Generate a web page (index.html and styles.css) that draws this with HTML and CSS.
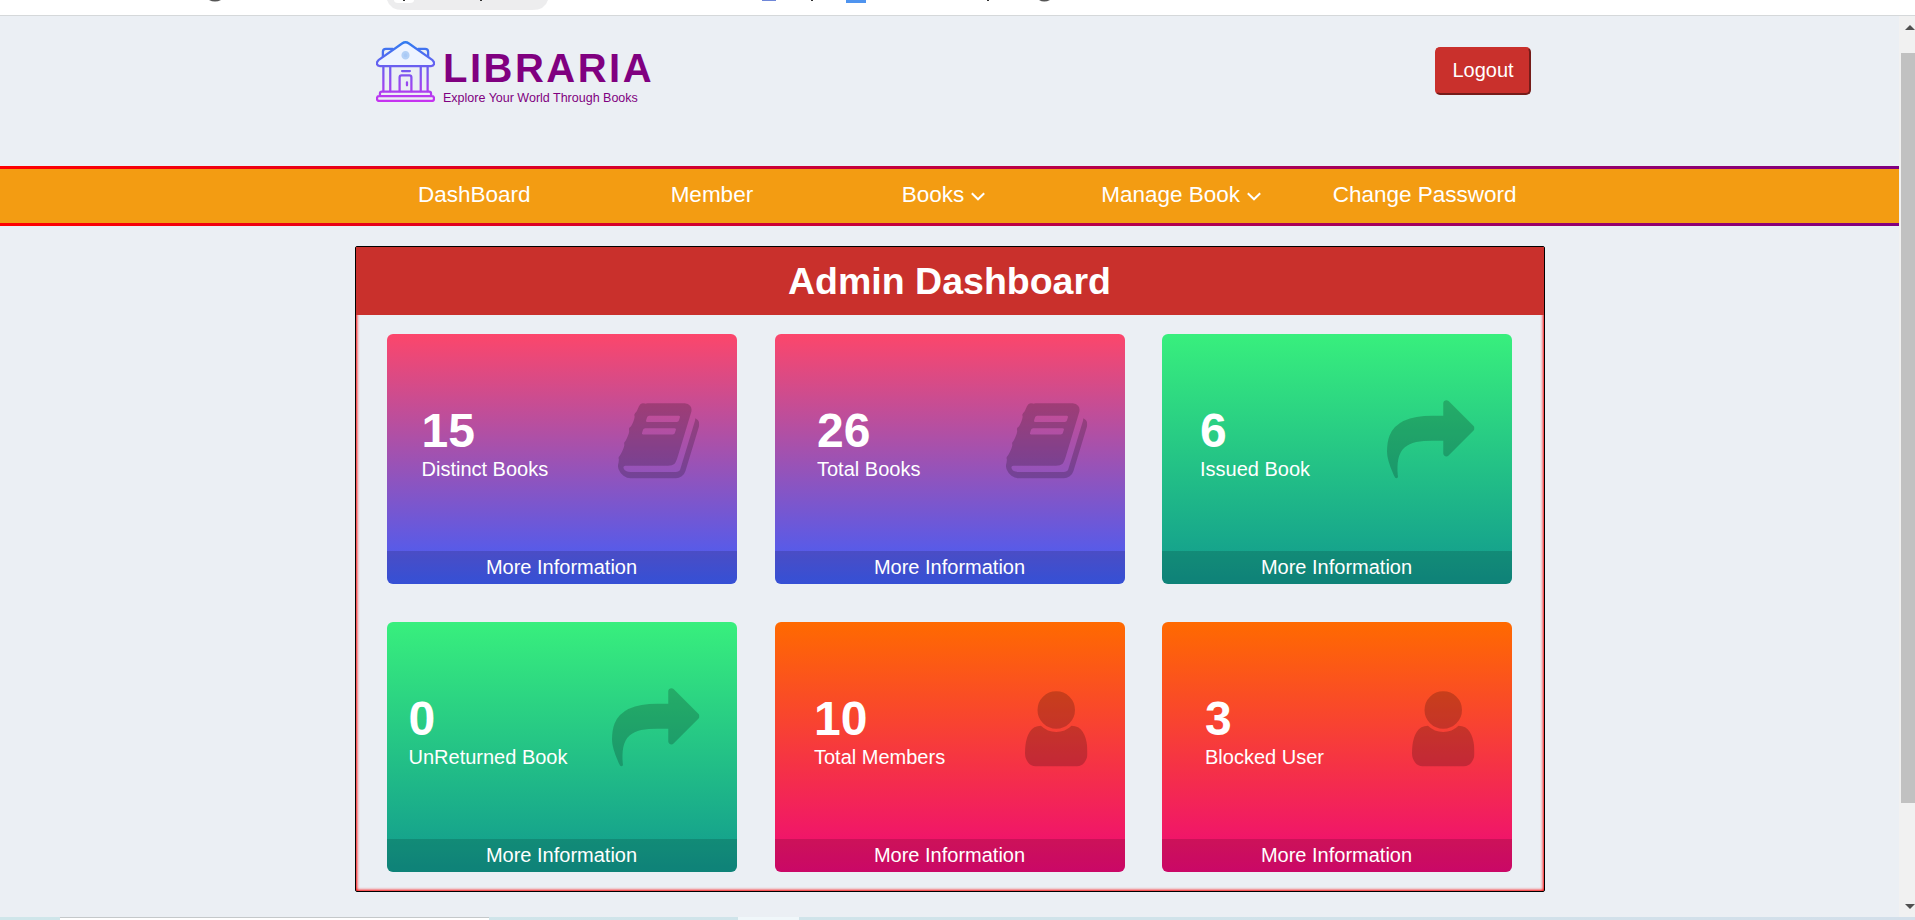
FILE: index.html
```html
<!DOCTYPE html>
<html lang="en">
<head>
<meta charset="utf-8">
<title>Libraria</title>
<link rel="stylesheet" href="styles.css">
</head>
<body>
<svg class="defs" aria-hidden="true">
  <symbol id="book" viewBox="0 0 1664 1792"><path d="M1639 478q40 57 18 129l-275 906q-19 64-76.500 107.500t-122.500 43.500h-923q-77 0-148.500-53.500t-99.500-131.500q-24-67-2-127 0-4 3-27t4-37q1-8-3-21.500t-3-19.500q2-11 8-21t16.500-23.500 16.500-23.500q23-38 45-91.500t30-91.500q3-10 .5-30t-.5-28q3-11 17-28t17-23q21-36 42-92t25-90q1-9-2.500-32t.5-28q4-13 22-30.500t22-22.500q19-26 42.500-84.500t27.500-96.500q1-8-3-25.500t-2-26.500q2-8 9-18t18-23 17-21q8-12 16.500-30.500t15-35 16-36 19.500-32 26.500-23.500 36-11.500 47.500 5.500l-1 3q38-9 51-9h761q74 0 114 56t18 130l-274 906q-36 119-71.500 153.500t-128.500 34.500h-869q-27 0-38 15-11 16-1 43 24 70 144 70h923q29 0 56-15.500t35-41.500l300-987q7-22 5-57 38 15 59 43zm-1064 2q-4 13 2 22.500t20 9.500h608q13 0 25.500-9.500t16.500-22.500l21-64q4-13-2-22.500t-20-9.500h-608q-13 0-25.500 9.500t-16.500 22.500zm-83 256q-4 13 2 22.500t20 9.500h608q13 0 25.500-9.500t16.500-22.500l21-64q4-13-2-22.500t-20-9.500h-608q-13 0-25.500 9.500t-16.500 22.500z"/></symbol>
  <symbol id="share" viewBox="0 0 1792 1792"><path d="M1792 640q0 26-19 45l-512 512q-19 19-45 19t-45-19-19-45v-256h-224q-98 0-175.500 6t-154 21.500-133 42.500-105.500 69.500-80 101-48.500 138.500-17.500 181q0 55 5 123 0 6 2.500 23.500t2.500 26.500q0 15-8.500 25t-23.500 10q-16 0-28-17-7-9-13-22t-13.500-30-10.500-24q-127-285-127-451 0-199 53-333 162-403 875-403h224v-256q0-26 19-45t45-19 45 19l512 512q19 19 19 45z"/></symbol>
  <symbol id="user" viewBox="256 0 1280 1792"><path d="M1536 1399q0 109-62.500 187t-150.500 78h-854q-88 0-150.500-78t-62.500-187q0-85 8.500-160.500t31.500-152 58.500-131 94-89 134.500-34.500q131 128 313 128t313-128q76 0 134.500 34.500t94 89 58.500 131 31.500 152 8.500 160.500zm-256-887q0 159-112.500 271.500t-271.500 112.500-271.500-112.500-112.500-271.500 112.500-271.500 271.500-112.500 271.500 112.500 112.500 271.500z"/></symbol>
  <symbol id="chevron" viewBox="0 0 14 9"><path d="M.8 1.300 7 7.300l6.200-6" fill="none" stroke="#fff" stroke-width="2"/></symbol>
</svg>

<div class="toolbar">
  <svg width="1915" height="15" aria-hidden="true">
    <path d="M387 0h161q-3 10-16 10H403q-13 0-16-10z" fill="#ededee"/>
    <path d="M394 0h20q0 3-4 3h-12q-4 0-4-3z" fill="#fff"/>
    <path d="M403 0h2v1h-2zM480 0h2v1h-2zM811 0h2v1h-2zM987 0h2v1h-2z" fill="#333"/>
    <path d="M209 0h12q-6 3-12 0zM1039 0h11q-6 3-11 0z" fill="#555"/>
    <path d="M762 0h14v1h-14z" fill="#6f87d8"/>
    <path d="M846 0h20v3h-20z" fill="#4f94ef"/>
  </svg>
</div>

<div class="viewport">
  <div class="page">
    <header class="header">
      <div class="brand">
        <svg class="brand-logo" viewBox="0 0 60 62" fill="none" stroke="url(#lg)" stroke-width="2.300" stroke-linejoin="round" stroke-linecap="round">
          <defs><linearGradient id="lg" gradientUnits="userSpaceOnUse" x1="0" y1="0" x2="0" y2="62"><stop offset="0" stop-color="#2f7df0"/><stop offset=".45" stop-color="#6f5cf0"/><stop offset="1" stop-color="#c832f0"/></linearGradient></defs>
          <path d="M7 17V11q0-3 3-3h7M53 17V11q0-3-3-3h-7"/>
          <path d="M26.500 2.500q3.500-2.500 7 0L57.500 19.500q2 2 1.500 4-.5 2-3 2H4q-2.500 0-3-2-.5-2 1.500-4z" fill="#eef4ff"/>
          <ellipse cx="30" cy="14.500" rx="3" ry="3.200" fill="#a9c9f6" stroke="#b3d0f6"/>
          <path d="M7.500 26v25M14.500 26v25M45.500 26v25M52.500 26v25M26.500 30.500h8"/>
          <path d="M24 51V37q0-2 2-2h8q2 0 2 2v14M31.500 42v3"/>
          <path d="M6 51.500h48q2 0 2 2V56H4v-2.500q0-2 2-2zM3 56h54q2 0 2 2.500T57 61H3q-2 0-2-2.500T3 56z"/>
        </svg>
        <div class="brand-text">
          <div class="brand-name">LIBRARIA</div>
          <div class="brand-tag">Explore Your World Through Books</div>
        </div>
      </div>
      <button class="logout">Logout</button>
    </header>

    <nav class="nav">
      <div class="nav-inner">
        <a class="nav-item">DashBoard</a>
        <a class="nav-item">Member</a>
        <a class="nav-item nav-item--menu">Books<svg class="chevron"><use href="#chevron"/></svg></a>
        <a class="nav-item nav-item--menu">Manage Book<svg class="chevron"><use href="#chevron"/></svg></a>
        <a class="nav-item">Change Password</a>
      </div>
    </nav>

    <main class="panel">
      <h1 class="panel-title">Admin Dashboard</h1>
      <div class="cards">
        <section class="card card--violet">
          <div class="card-body card-body--distinct">
            <div><div class="count">15</div><div class="label">Distinct Books</div></div>
            <svg class="icon icon--book"><use href="#book"/></svg>
          </div>
          <a class="more">More Information</a>
        </section>
        <section class="card card--violet">
          <div class="card-body card-body--total">
            <div><div class="count">26</div><div class="label">Total Books</div></div>
            <svg class="icon icon--book"><use href="#book"/></svg>
          </div>
          <a class="more">More Information</a>
        </section>
        <section class="card card--green">
          <div class="card-body card-body--issued">
            <div><div class="count">6</div><div class="label">Issued Book</div></div>
            <svg class="icon icon--share"><use href="#share"/></svg>
          </div>
          <a class="more">More Information</a>
        </section>
        <section class="card card--green">
          <div class="card-body card-body--unreturned">
            <div><div class="count">0</div><div class="label">UnReturned Book</div></div>
            <svg class="icon icon--share"><use href="#share"/></svg>
          </div>
          <a class="more">More Information</a>
        </section>
        <section class="card card--orange">
          <div class="card-body card-body--members">
            <div><div class="count">10</div><div class="label">Total Members</div></div>
            <svg class="icon icon--user"><use href="#user"/></svg>
          </div>
          <a class="more">More Information</a>
        </section>
        <section class="card card--orange">
          <div class="card-body card-body--blocked">
            <div><div class="count">3</div><div class="label">Blocked User</div></div>
            <svg class="icon icon--user"><use href="#user"/></svg>
          </div>
          <a class="more">More Information</a>
        </section>
      </div>
    </main>
  </div>

  <div class="scrollbar">
    <svg class="arrow" viewBox="0 0 10 5"><path d="M0 5 5 0l5 5z" fill="#505050"/></svg>
    <div class="thumb"></div>
    <svg class="arrow arrow--down" viewBox="0 0 10 5"><path d="M0 0h10L5 5z" fill="#505050"/></svg>
  </div>
</div>

<div class="taskbar"><div class="task-search"></div><div class="task-active"></div></div>
</body>
</html>
```

FILE: styles.css
```css
* { box-sizing: border-box; }

body {
  margin: 0;
  height: 920px;
  overflow: hidden;
  display: flex;
  flex-direction: column;
  background: #ebeff4;
  font-family: "Liberation Sans", Arial, sans-serif;
}

svg { display: block; }
.defs { display: none; }

.toolbar {
  height: 16px;
  background: #fff;
  border-bottom: 1px solid #d5d8da;
}

.viewport {
  height: 901px;
  display: flex;
}

.page { width: 1899px; }

.header {
  height: 150px;
  padding: 25px 368px 0 376px;
  display: flex;
  justify-content: space-between;
}

.brand { display: flex; gap: 8px; }
.brand-logo { width: 59px; height: 61px; }
.brand-text { color: purple; padding-top: 4px; }

.brand-name {
  font-size: 40px;
  font-weight: bold;
  line-height: 46px;
  letter-spacing: 2.5px;
}

.brand-tag {
  font-size: 12.5px;
  line-height: 15px;
}

.logout {
  width: 96px;
  height: 48px;
  margin-top: 6px;
  padding: 0 0 1px;
  border: 2px outset #c9302c;
  border-radius: 5px;
  background: #c9302c;
  color: #fff;
  font: 20px "Liberation Sans", Arial, sans-serif;
}

.nav {
  height: 60px;
  padding: 3px 0;
  background:
    linear-gradient(#f39c12, #f39c12) 0 3px / 100% 54px no-repeat,
    linear-gradient(to right, red, purple);
}

.nav-inner {
  width: 1188px;
  height: 54px;
  margin: 0 auto;
  display: grid;
  grid-template-columns: repeat(5, 1fr);
}

.nav-item {
  display: flex;
  align-items: center;
  justify-content: center;
  padding-bottom: 3px;
  color: #fff;
  font-size: 22.5px;
}

.nav-item--menu { padding-right: 12px; }
.chevron { width: 14px; height: 9px; margin: 3px 0 0 7px; }

.panel {
  width: 1190px;
  height: 646px;
  margin: 20px auto 0;
  border: 1px solid #000;
  border-radius: 2px;
  box-shadow: inset 0 0 3px 1px red;
}

.panel-title {
  height: 68px;
  margin: 0;
  background: #c9302c;
  color: #fff;
  font-size: 37.5px;
  line-height: 68px;
  text-align: center;
}

.cards {
  padding: 19px 31px 0;
  display: grid;
  grid-template-columns: 351px 350px 350px;
  gap: 38px 37px;
}

.card {
  width: 350px;
  height: 250px;
  display: flex;
  flex-direction: column;
  border-radius: 6px;
  overflow: hidden;
  color: #fff;
  font-size: 20px;
}

.card--violet { background: linear-gradient(#fc466b, #3f5efb); }
.card--green { background: linear-gradient(#38ef7d, #11998e); }
.card--orange { background: linear-gradient(#ff6a00, #ee0979); }

.card-body {
  height: 217px;
  padding: 0 37px 3px 35px;
  display: flex;
  align-items: center;
  justify-content: space-between;
}

.card-body--total { padding-left: 42.5px; }
.card-body--issued { padding-left: 38.5px; }
.card-body--unreturned { padding-left: 22px; padding-bottom: 4px; }
.card-body--members { padding-left: 39.5px; padding-bottom: 4px; }
.card-body--blocked { padding-left: 43.5px; padding-bottom: 4px; }

.count {
  padding-top: 3px;
  font-size: 48px;
  font-weight: bold;
  line-height: 54px;
}

.label { line-height: 23px; }

.icon { height: 87.5px; fill: rgba(0, 0, 0, 0.2); }
.icon--book { width: 81.25px; }
.icon--share { width: 87.5px; }
.icon--user { width: 62.5px; }

.more {
  height: 33px;
  background: rgba(0, 0, 0, 0.15);
  line-height: 32px;
  text-align: center;
}

.scrollbar {
  width: 16px;
  padding: 9px 0 8px;
  display: flex;
  flex-direction: column;
  background: #f1f1f1;
}

.arrow { width: 10px; height: 5px; margin-left: 6px; }
.thumb { height: 750px; margin: 23px 0 0 2px; background: #c1c1c1; }
.arrow--down { margin-top: auto; }

.taskbar {
  height: 3px;
  padding-left: 60px;
  display: flex;
  gap: 249px;
  background: linear-gradient(to right, #cfe6ea, #d0e3ea 60%, #d3dfea);
}

.task-search { width: 429px; background: #fff; border-top: 1px solid #c4c8ca; }
.task-active { width: 61px; background: #f0f7fa; }
```
